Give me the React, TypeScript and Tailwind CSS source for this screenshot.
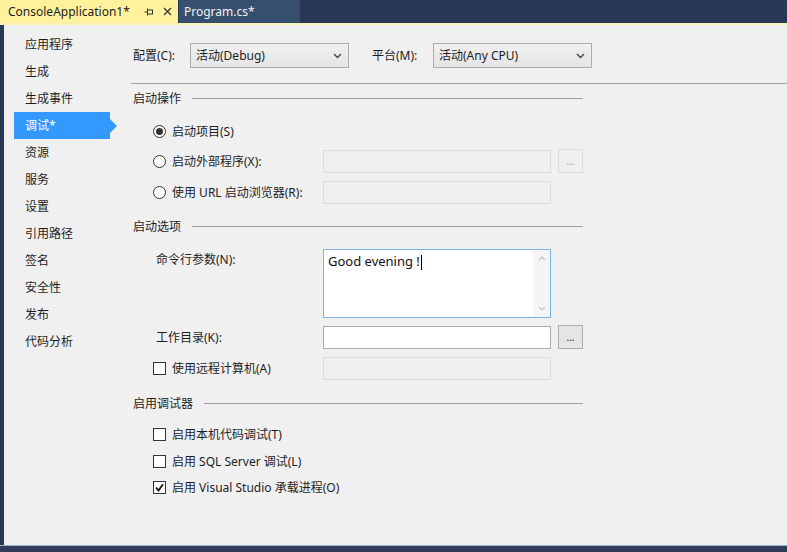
import React from "react";

const FONT = { fontFamily: '"Noto Sans", "Noto Sans CJK SC", sans-serif' };

function Chevron() {
  return (
    <svg width="9" height="6" viewBox="0 0 9 6" className="shrink-0">
      <polyline points="1,1 4.5,4.5 8,1" fill="none" stroke="#444" strokeWidth="1.4" />
    </svg>
  );
}

function Select({ value }: { value: string }) {
  return (
    <div className="w-[159px] h-[25px] border border-[#acacac] bg-gradient-to-b from-[#f0f0f0] to-[#e5e5e5] flex items-center pl-[5px] pr-[6px]">
      <span className="flex-1 text-[12px] text-[#1e1e1e] pt-[1px]">{value}</span>
      <Chevron />
    </div>
  );
}

function Heading({ text }: { text: string }) {
  return (
    <div className="h-[16px] w-[452px] flex items-center pl-[2px]">
      <span className="text-[12px] text-[#1e1e1e] pt-[2px]">{text}</span>
      <div className="flex-1 h-px bg-[#a0a0a0] ml-[11px]" />
    </div>
  );
}

function Radio({ checked }: { checked?: boolean }) {
  return (
    <div className="w-[13px] h-[13px] rounded-full border border-[#333] bg-white flex items-center justify-center shrink-0">
      {checked && <div className="w-[7px] h-[7px] rounded-full bg-[#333]" />}
    </div>
  );
}

function Check({ checked }: { checked?: boolean }) {
  return (
    <div className="w-[13px] h-[13px] border border-[#333] bg-white flex items-center justify-center shrink-0">
      {checked && (
        <svg width="9" height="9" viewBox="0 0 9 9">
          <polyline points="1,4.5 3.5,7.5 8,1.2" fill="none" stroke="#111" strokeWidth="1.8" />
        </svg>
      )}
    </div>
  );
}

function DisabledBox() {
  return <div className="w-[228px] h-[23px] border border-[#dcdcdc] bg-[#efefef]" />;
}

function DotsButton({ enabled }: { enabled?: boolean }) {
  return (
    <div
      className={`ml-[7px] w-[25px] h-[24px] border flex items-center justify-center text-[10px] leading-none ${
        enabled ? "border-[#adadad] bg-[#e5e5e5] text-[#222]" : "border-[#dcdcdc] bg-[#efefef] text-[#a0a0a0]"
      }`}
    >
      ...
    </div>
  );
}

const navItems = ["应用程序", "生成", "生成事件", "调试*", "资源", "服务", "设置", "引用路径", "签名", "安全性", "发布", "代码分析"];

export default function App() {
  return (
    <div className="w-[787px] h-[552px] bg-[#293955] flex flex-col overflow-hidden" style={FONT}>
      {/* Tabs */}
      <div className="h-[23px] flex items-stretch">
        <div className="w-[178px] bg-[#fff29d] flex items-center pl-[8px] pr-[6px] text-[12px] text-[#1e1e1e]">
          <span className="flex-1">ConsoleApplication1*</span>
          <svg width="10" height="10" viewBox="0 0 10 10" className="mr-[9px]">
            <line x1="0.5" y1="5" x2="3.5" y2="5" stroke="#333" strokeWidth="1" />
            <line x1="3.5" y1="1.5" x2="3.5" y2="8.5" stroke="#333" strokeWidth="1" />
            <rect x="3.5" y="3" width="5" height="4" fill="none" stroke="#333" strokeWidth="1" />
          </svg>
          <svg width="9" height="9" viewBox="0 0 9 9">
            <line x1="1" y1="1" x2="8" y2="8" stroke="#333" strokeWidth="1.3" />
            <line x1="8" y1="1" x2="1" y2="8" stroke="#333" strokeWidth="1.3" />
          </svg>
        </div>
        <div className="ml-[1px] w-[121px] bg-[#364e6f] flex items-center pl-[5px] text-[12px] text-[#f2f2f2]">
          Program.cs*
        </div>
      </div>
      <div className="h-[2px] bg-[#f7f0b4]" />

      {/* Body */}
      <div className="flex-1 flex pl-[4px]">
        <div className="flex-1 bg-[#f0f0f0] flex text-[#1e1e1e]">
          {/* Nav */}
          <div className="w-[127px] pt-[6px] flex flex-col">
            {navItems.map((t) =>
              t === "调试*" ? (
                <div key={t} className="h-[27px] flex items-center">
                  <div className="ml-[10px] w-[96px] h-[27px] bg-[#3399ff] text-white text-[12px] flex items-center pl-[11px]">
                    {t}
                  </div>
                  <svg width="7" height="14" viewBox="0 0 7 14">
                    <polygon points="0,0 7,7 0,14" fill="#3399ff" />
                  </svg>
                </div>
              ) : (
                <div key={t} className="h-[27px] flex items-center pl-[21px] text-[12px]">
                  {t}
                </div>
              )
            )}
          </div>

          {/* Main */}
          <div className="flex-1 flex flex-col text-[12px]">
            <div className="mt-[18px] h-[25px] flex items-center pl-[2px]">
              <span className="w-[57px] pt-[1px]">配置(C):</span>
              <Select value="活动(Debug)" />
              <span className="ml-[23px] w-[61px] pt-[1px]">平台(M):</span>
              <Select value="活动(Any CPU)" />
            </div>
            <div className="mt-[15px] h-px bg-[#a0a0a0]" />

            <div className="mt-[6px]">
              <Heading text="启动操作" />
            </div>

            <div className="mt-[13px] h-[24px] flex items-center pl-[22px]">
              <Radio checked />
              <span className="ml-[6px] pt-[2px]">启动项目(S)</span>
            </div>
            <div className="mt-[6px] h-[24px] flex items-center pl-[22px]">
              <div className="w-[170px] flex items-center">
                <Radio />
                <span className="ml-[6px] pt-[2px]">启动外部程序(X):</span>
              </div>
              <DisabledBox />
              <DotsButton />
            </div>
            <div className="mt-[7px] h-[24px] flex items-center pl-[22px]">
              <div className="w-[170px] flex items-center">
                <Radio />
                <span className="ml-[6px] pt-[2px]">使用 URL 启动浏览器(R):</span>
              </div>
              <DisabledBox />
            </div>

            <div className="mt-[14px]">
              <Heading text="启动选项" />
            </div>

            <div className="mt-[15px] h-[69px] flex items-start pl-[22px]">
              <div className="w-[170px] pl-[3px] pt-[2px]">命令行参数(N):</div>
              <div className="w-[228px] h-[69px] border border-[#7eb4ea] bg-white flex">
                <div className="flex-1 pl-[4px] pt-[2px] text-[13px] text-[#111]">
                  Good evening !<span className="inline-block w-px h-[15px] bg-black align-middle ml-[1px]" />
                </div>
                <div className="w-[17px] bg-[#f5f5f5] flex flex-col items-center justify-between py-[6px]">
                  <svg width="8" height="5" viewBox="0 0 8 5">
                    <polyline points="1,4 4,1 7,4" fill="none" stroke="#c2c2c2" strokeWidth="1.2" />
                  </svg>
                  <svg width="8" height="5" viewBox="0 0 8 5">
                    <polyline points="1,1 4,4 7,1" fill="none" stroke="#c2c2c2" strokeWidth="1.2" />
                  </svg>
                </div>
              </div>
            </div>

            <div className="mt-[7px] h-[24px] flex items-center pl-[22px]">
              <div className="w-[170px] pl-[3px] pt-[2px]">工作目录(K):</div>
              <div className="w-[228px] h-[23px] border border-[#abadb3] bg-white" />
              <DotsButton enabled />
            </div>
            <div className="mt-[7px] h-[24px] flex items-center pl-[22px]">
              <div className="w-[170px] flex items-center">
                <Check />
                <span className="ml-[6px] pt-[2px]">使用远程计算机(A)</span>
              </div>
              <DisabledBox />
            </div>

            <div className="mt-[15px]">
              <Heading text="启用调试器" />
            </div>

            <div className="mt-[15px] h-[16px] flex items-center pl-[22px]">
              <Check />
              <span className="ml-[6px] pt-[2px]">启用本机代码调试(T)</span>
            </div>
            <div className="mt-[11px] h-[16px] flex items-center pl-[22px]">
              <Check />
              <span className="ml-[6px] pt-[2px]">启用 SQL Server 调试(L)</span>
            </div>
            <div className="mt-[10px] h-[16px] flex items-center pl-[22px]">
              <Check checked />
              <span className="ml-[6px] pt-[2px]">启用 Visual Studio 承载进程(O)</span>
            </div>
          </div>
        </div>
      </div>

      {/* Footer */}
      <div className="h-[7px] border-t border-[#9fb0cc] bg-[#2f3d5b]" />
    </div>
  );
}
